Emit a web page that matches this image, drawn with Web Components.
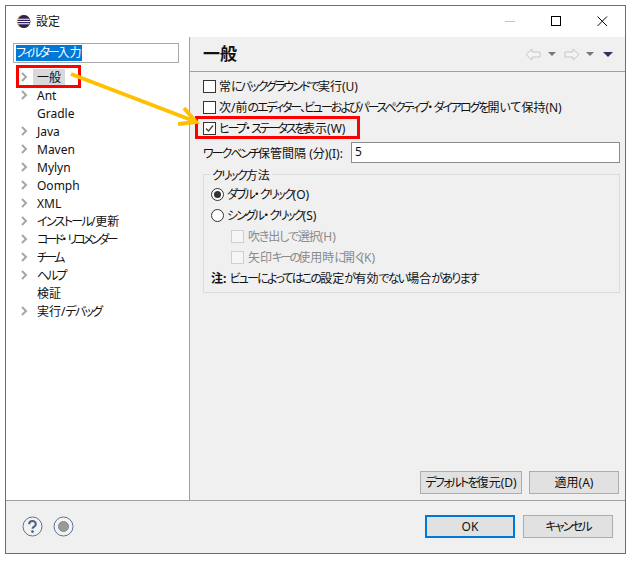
<!DOCTYPE html>
<html lang="ja"><head><meta charset="utf-8"><style>
html,body{margin:0;background:#fff}
body{width:631px;height:561px;overflow:hidden;font:12px "Noto Sans","Noto Sans CJK JP",sans-serif;font-feature-settings:"palt";color:#111;position:relative}
</style></head><body>
<template id="t-window"><style>
:host{display:flex;flex-direction:column;box-sizing:border-box;width:621px;height:549px;margin:5px 0 0 5px;border:1px solid #2a7fc3;background:#fff}
.main{flex:1;display:flex;min-height:0}
</style><slot name="title"></slot><div class="main"><slot name="left"></slot><slot name="right"></slot></div><slot name="foot"></slot></template>

<template id="t-title"><style>
:host{display:flex;align-items:center;height:31px;flex:none;padding-left:10px;background:#fff}
svg{display:block}
.t{margin-left:5px;font-size:12px;line-height:16px}
.c{margin-left:auto;display:flex}
.b{width:46px;height:30px;display:flex;align-items:center;justify-content:center}
</style>
<svg width="15" height="15" viewBox="0 0 15 15"><circle cx="7.5" cy="7.5" r="6.8" fill="#f7941e"/><circle cx="8" cy="7.5" r="6.4" fill="#2c2255"/><path d="M1.5 5.2h12M1 7.5h13M1.5 9.8h12" stroke="#fff" stroke-width="1.1"/></svg>
<span class="t"><slot></slot></span>
<div class="c">
<div class="b"><svg width="11" height="11"><path d="M0 5.5h10" stroke="#c4c4c4"/></svg></div>
<div class="b"><svg width="11" height="11"><rect x=".5" y=".5" width="9" height="9" fill="none" stroke="#000"/></svg></div>
<div class="b"><svg width="11" height="11"><path d="M.5.5l9.5 9.5M10 .5L.5 10" stroke="#000"/></svg></div>
</div></template>

<template id="t-left"><style>
:host{display:flex;flex-direction:column;box-sizing:border-box;width:184px;flex:none;border-right:1px solid #a0a0a0;padding:6px 0 0 7px;background:#fff}
.f{box-sizing:border-box;width:166px;height:20px;border:1px solid #a9a9a9;padding:1px 2px;line-height:16px;flex:none}
.f span{background:#0078d7;color:#fff;display:inline-block;height:16px;line-height:15px}
.l{margin-top:5px}
</style><div class="f"><span><slot name="filter"></slot></span></div><div class="l"><slot></slot></div></template>

<template id="t-item"><style>
:host{display:flex;align-items:center;height:18px}
.a{width:20px;height:18px;display:flex;align-items:center;justify-content:center;flex:none;padding-left:2px;box-sizing:border-box}
svg{visibility:hidden}
:host([arrow]) svg{visibility:visible}
.x{padding:0 4px;line-height:17px;height:17px;white-space:nowrap}
:host([selected]) .x{background:#d9d9d9}
</style><div class="a"><svg width="7" height="10"><path d="M1 1l4 4-4 4" fill="none" stroke="#a6a6a6" stroke-width="2"/></svg></div><span class="x"><slot></slot></span></template>

<template id="t-right"><style>
:host{display:flex;flex-direction:column;flex:1;min-width:0;background:#f0f0f0;box-sizing:border-box}
.h{flex:none;display:flex;align-items:center;padding-left:13px;border-bottom:1px solid #a0a0a0;box-sizing:border-box;height:35px}
.h b{font-size:17px;font-weight:700;line-height:20px}
.tb{margin-left:auto;margin-right:12px;display:flex;align-items:center}
.body{flex:1;display:flex;flex-direction:column;padding:4px 5px 6px 13px;min-height:0}
.s{flex:1}
.btns{display:flex;justify-content:flex-end;gap:7px;padding-right:1px}
</style><div class="h"><b><slot name="head"></slot></b><div class="tb">
<svg width="16" height="13"><path d="M1 6.5L7 1v3h8v5H7v3z" fill="#f4f4f4" stroke="#c6c6c6"/></svg><svg width="8" height="4" style="margin-left:7px"><path d="M0 0h8L4 4z" fill="#777"/></svg>
<svg width="16" height="13" style="margin-left:8px"><path d="M15 6.5L9 1v3H1v5h8v3z" fill="#f4f4f4" stroke="#c6c6c6"/></svg><svg width="8" height="4" style="margin-left:6px"><path d="M0 0h8L4 4z" fill="#777"/></svg>
<svg width="10" height="5" style="margin-left:9px"><path d="M0 0h10L5 5z" fill="#3a2a5e"/></svg>
</div></div><div class="body"><slot></slot><div class="s"></div><div class="btns"><slot name="btn"></slot></div></div></template>

<template id="t-check"><style>
:host{display:flex;align-items:center;height:21px;line-height:16px;white-space:nowrap}
i{box-sizing:border-box;width:13px;height:13px;border:1px solid #333;background:#fff;flex:none;margin-right:3px;display:block}
svg{display:none}
:host([checked]) svg{display:block}
:host([disabled]){color:#8a8a8a}
:host([disabled]) i{border-color:#cfcfcf;background:#f6f6f6;margin-right:4px}
</style><i><svg width="11" height="11"><path d="M2 5.5l2.5 2.5L9 2.5" fill="none" stroke="#444" stroke-width="1.3"/></svg></i><slot></slot></template>

<template id="t-radio"><style>
:host{display:flex;align-items:center;height:21px;line-height:16px;white-space:nowrap}
i{box-sizing:border-box;width:13px;height:13px;border:1px solid #333;border-radius:50%;background:#fff;flex:none;margin-right:3px;display:flex;align-items:center;justify-content:center}
:host([checked]) i::after{content:"";width:7px;height:7px;border-radius:50%;background:#333}
</style><i></i><slot></slot></template>

<template id="t-field"><style>
:host{display:flex;align-items:center;height:21px;margin-top:3px;white-space:nowrap}
.i{box-sizing:border-box;margin-left:auto;width:269px;flex:none;height:21px;background:#fff;border:1px solid #8c8c8c;padding:0 2px 0 3px;line-height:18px}
</style><slot></slot><div class="i"><slot name="value"></slot></div></template>

<template id="t-group"><style>
:host{display:block;box-sizing:border-box;position:relative;margin-top:11px;height:119px;border:1px solid #dcdcdc;padding:9px 7px 0 7px}
.lg{position:absolute;left:6px;top:-7px;background:#f0f0f0;padding:0 2px;line-height:16px}
</style><div class="lg"><slot name="legend"></slot></div><slot></slot></template>

<template id="t-button"><style>
:host{display:flex;align-items:center;justify-content:center;box-sizing:border-box;width:90px;height:23px;border:1px solid #adadad;background:#e1e1e1;line-height:16px;white-space:nowrap}
:host([wide]){width:102px}
:host([primary]){border:2px solid #0078d7}
</style><slot></slot></template>

<template id="t-foot"><style>
:host{display:flex;align-items:center;height:53px;flex:none;box-sizing:border-box;border-top:1px solid #a0a0a0;background:#f0f0f0;padding:0 12px 1px 16px}
.ic{display:flex;gap:10px}
svg{display:block}
.r{margin-left:auto;display:flex;gap:8px}
</style><div class="ic">
<svg width="21" height="21" viewBox="0 0 21 21"><circle cx="10.5" cy="10.5" r="9.5" fill="#f2f2f2" stroke="#5b7296"/><path d="M7.2 8.2c0-4.2 6.6-4.2 6.6 0 0 2.4-3.3 2.4-3.3 4.6" fill="none" stroke="#4a628a" stroke-width="2"/><circle cx="10.5" cy="15.6" r="1.4" fill="#4a628a"/></svg>
<svg width="21" height="21" viewBox="0 0 21 21"><circle cx="10.5" cy="10.5" r="9.5" fill="#f2f2f2" stroke="#5b7296"/><circle cx="10.5" cy="10.5" r="5" fill="#9a9a9a" stroke="#888"/></svg>
</div><div class="r"><slot></slot></div></template>

<template id="t-overlay"><style>
:host{display:block;position:absolute;left:0;top:0;width:631px;height:561px;pointer-events:none}
svg{position:absolute;left:0;top:0}
</style><svg width="631" height="561"><rect x="17.5" y="66.5" width="62" height="20" fill="none" stroke="#f00" stroke-width="3"/><rect x="196.5" y="117.5" width="162" height="20" fill="none" stroke="#f00" stroke-width="3"/><path d="M71 74L194 121" stroke="#ffc000" stroke-width="4" fill="none"/><path d="M184 108L196 122L178 124" stroke="#ffc000" stroke-width="4" fill="none"/></svg></template>

<x-window>
<x-title slot="title">設定</x-title>
<x-left slot="left"><span slot="filter"><span style="letter-spacing:-2.2px">フィルター</span>入力</span>
<x-item arrow selected>一般</x-item><x-item arrow>Ant</x-item><x-item>Gradle</x-item><x-item arrow>Java</x-item><x-item arrow>Maven</x-item><x-item arrow>Mylyn</x-item><x-item arrow>Oomph</x-item><x-item arrow>XML</x-item><x-item arrow><span style="letter-spacing:-1.7px">インストール</span>/更新</x-item><x-item arrow><span style="letter-spacing:-2.8px">コード</span>・<span style="letter-spacing:-2.8px">リコメンダー</span></x-item><x-item arrow><span style="letter-spacing:-2.6px">チーム</span></x-item><x-item arrow><span style="letter-spacing:-2px">ヘルプ</span></x-item><x-item>検証</x-item><x-item arrow>実行/<span style="letter-spacing:-1.75px">デバッグ</span></x-item>
</x-left>
<x-right slot="right"><span slot="head">一般</span>
<x-check>常<span style="letter-spacing:-1.9px">にバックグラウンドで</span>実行(U)</x-check>
<x-check>次/前<span style="letter-spacing:-2.05px">のエディター、ビューおよびパースペクティブ</span>・<span style="letter-spacing:-2.05px">ダイアログを</span>開いて保持(N)</x-check>
<x-check checked><span style="letter-spacing:-2.3px">ヒープ</span>・<span style="letter-spacing:-2.3px">ステータスを</span>表示(W)</x-check>
<x-field><span style="letter-spacing:-2px">ワークベンチ</span>保管間隔 (分)(I):<span slot="value">5</span></x-field>
<x-group><span slot="legend"><span style="letter-spacing:-1.75px">クリック</span>方法</span>
<x-radio checked><span style="letter-spacing:-2px">ダブル</span>・<span style="letter-spacing:-2px">クリック</span>(O)</x-radio>
<x-radio><span style="letter-spacing:-1.9px">シングル</span>・<span style="letter-spacing:-1.9px">クリック</span>(S)</x-radio>
<x-check disabled style="margin-left:20px"><span style="letter-spacing:-1.1px">吹き出しで選択</span>(H)</x-check>
<x-check disabled style="margin-left:20px">矢印<span style="letter-spacing:-2.8px">キーの</span>使用時<span style="letter-spacing:-2.8px">に</span>開<span style="letter-spacing:-2.8px">く</span>(K)</x-check>
<div style="height:21px;line-height:21px;white-space:nowrap"><b>注:</b> <span style="letter-spacing:-1.75px">ビューによってはこの</span>設定<span style="letter-spacing:-1.75px">が</span>有効<span style="letter-spacing:-1.75px">でない</span>場合<span style="letter-spacing:-1.75px">があります</span></div>
</x-group>
<x-button slot="btn" wide><span style="letter-spacing:-1.8px">デフォルトを</span>復元(D)</x-button><x-button slot="btn">適用(A)</x-button>
</x-right>
<x-foot slot="foot"><x-button primary>OK</x-button><x-button><span style="letter-spacing:-1.8px">キャンセル</span></x-button></x-foot>
</x-window>
<x-overlay></x-overlay>
<script>
for(const n of ['window','title','left','item','right','check','radio','field','group','button','foot','overlay']){
 customElements.define('x-'+n,class extends HTMLElement{constructor(){super();this.attachShadow({mode:'open'}).append(document.getElementById('t-'+n).content.cloneNode(true))}});
}
</script>
</body></html>
